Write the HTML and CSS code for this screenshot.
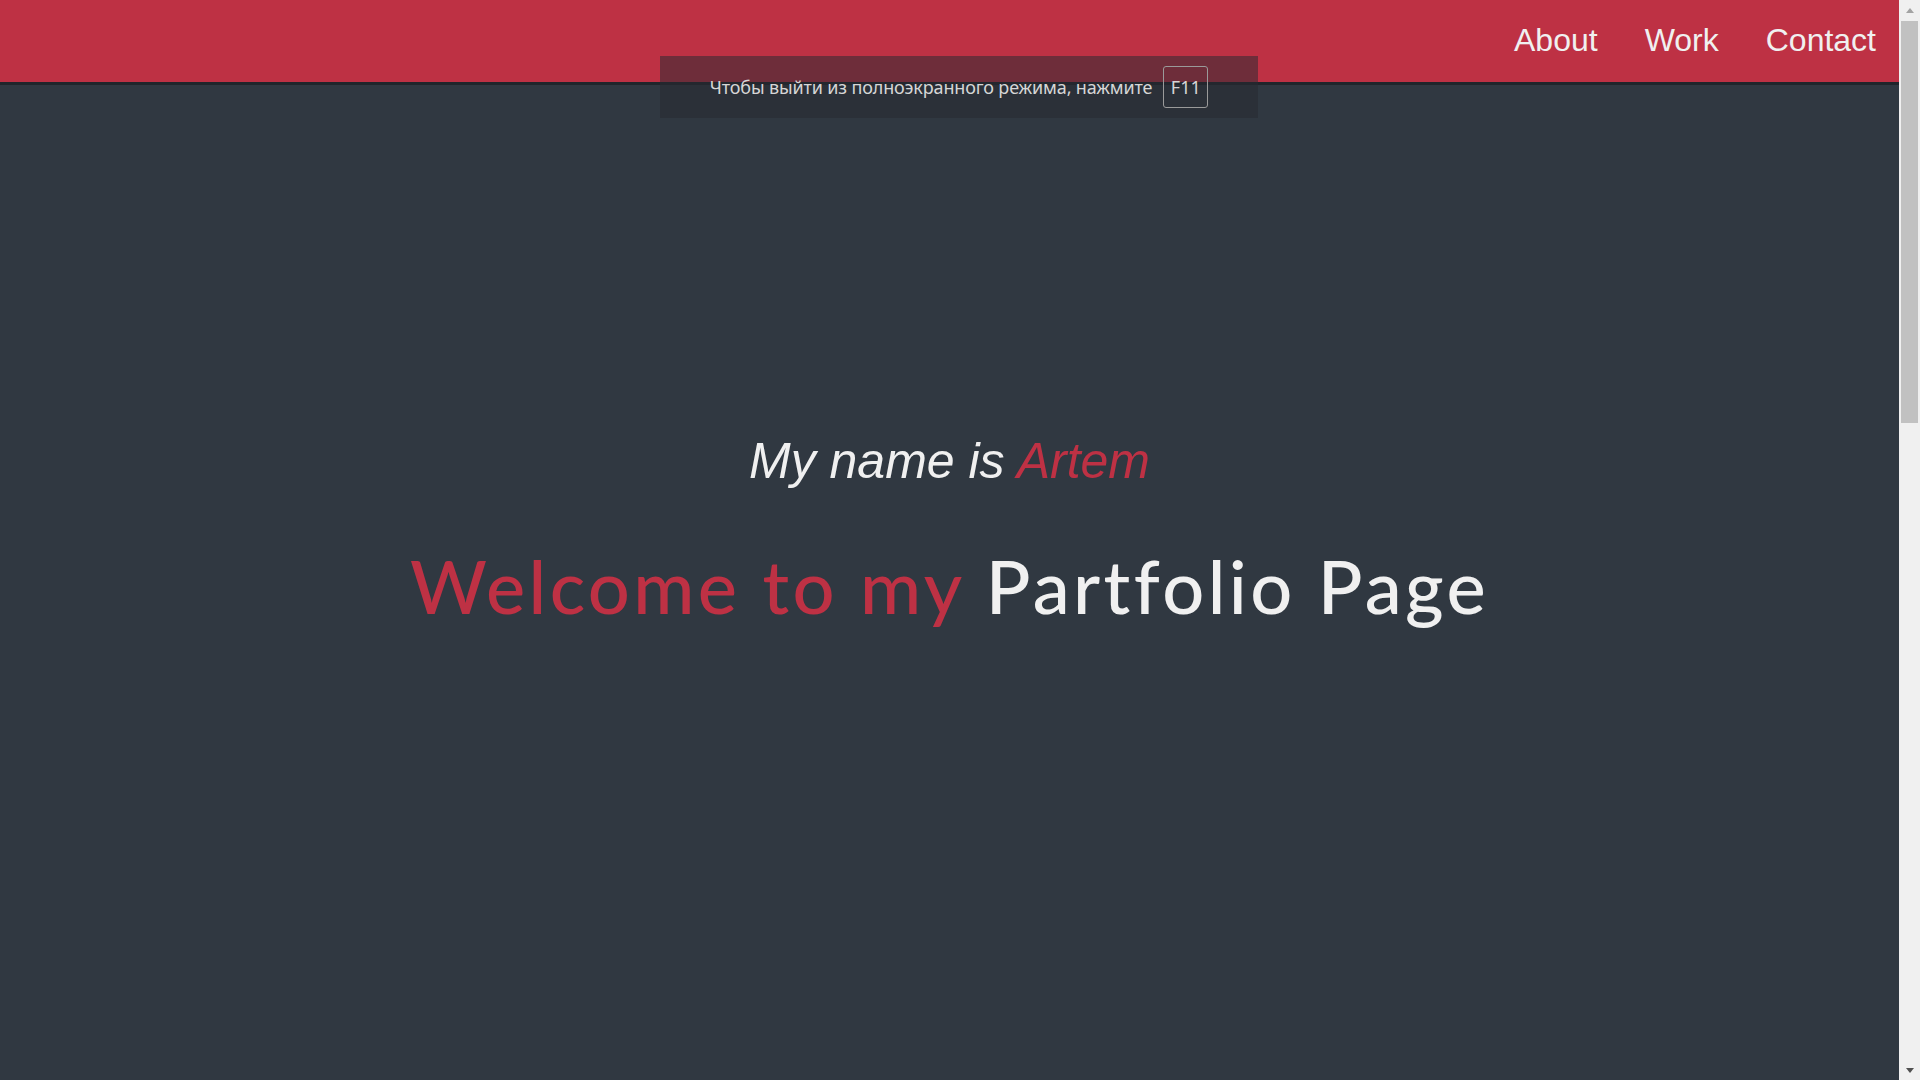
FILE: index.html
```html
<!DOCTYPE html>
<html lang="en">
<head>
<meta charset="utf-8">
<title>Portfolio</title>
<link rel="stylesheet" href="styles.css">
</head>
<body>
  <div class="page">
    <header class="navbar">
      <ul class="nav-list">
        <li><a href="#about">About</a></li>
        <li><a href="#work">Work</a></li>
        <li><a href="#contact">Contact</a></li>
      </ul>
    </header>
    <section class="welcome">
      <h2 class="intro">My name is <span class="accent">Artem</span></h2>
      <h1 class="title"><span class="accent">Welcome to my</span> Partfolio Page</h1>
    </section>
  </div>
  <div class="scrollbar">
    <div class="sb-btn"><span class="arrow-up"></span></div>
    <div class="sb-thumb"></div>
    <div class="sb-track"></div>
    <div class="sb-btn sb-btn-bottom"><span class="arrow-down"></span></div>
  </div>
  <div class="fs-notice">
    <span class="fs-text">Чтобы выйти из полноэкранного режима, нажмите</span>
    <span class="fs-key">F11</span>
  </div>
</body>
</html>
```

FILE: styles.css
```css
* { box-sizing: border-box; }

html, body {
  margin: 0;
  padding: 0;
  height: 100%;
  overflow: hidden;
}

body {
  display: flex;
  flex-direction: row;
  background: #303841;
  position: relative;
  font-family: "Liberation Sans", Arial, sans-serif;
}

.page {
  flex: 1;
  display: flex;
  flex-direction: column;
  height: 100vh;
  background: #303841;
}

.navbar {
  height: 85px;
  background: #be3144;
  border-bottom: 3px solid #20252b;
  display: flex;
  justify-content: flex-end;
  align-items: center;
  padding-right: 23px;
  padding-bottom: 2px;
}

.nav-list {
  list-style: none;
  margin: 0;
  padding: 0;
  display: flex;
  gap: 47px;
}

.nav-list a {
  color: #f0f0f0;
  text-decoration: none;
  font-size: 32px;
  line-height: 37px;
  display: block;
}

.welcome {
  flex: 1;
  display: flex;
  flex-direction: column;
  align-items: center;
  padding-top: 351px;
}

.intro {
  margin: 0;
  font-family: "Liberation Sans", Arial, sans-serif;
  font-style: italic;
  font-weight: 400;
  font-size: 50px;
  line-height: 50px;
  color: #f0f0f0;
}

.title {
  margin: 63px 0 0;
  font-family: Lato, "Noto Sans", sans-serif;
  font-weight: 500;
  font-size: 74px;
  line-height: 74px;
  letter-spacing: 3.4px;
  font-variant-ligatures: none;
  color: #f0f0f0;
  white-space: nowrap;
}

.accent { color: #be3144; }

.scrollbar {
  width: 21px;
  height: 100vh;
  background: #f0f0f0;
  display: flex;
  flex-direction: column;
  flex-shrink: 0;
}

.sb-btn {
  height: 21px;
  display: flex;
  justify-content: center;
  align-items: center;
  padding-left: 1px;
}

.sb-btn-bottom { padding-top: 2px; }

.arrow-up {
  width: 0;
  height: 0;
  border-left: 4.5px solid transparent;
  border-right: 4.5px solid transparent;
  border-bottom: 5px solid #a3a3a3;
}

.arrow-down {
  width: 0;
  height: 0;
  border-left: 4.5px solid transparent;
  border-right: 4.5px solid transparent;
  border-top: 5px solid #505050;
}

.sb-thumb {
  height: 402px;
  width: 17px;
  margin-left: 2px;
  background: #c1c1c1;
}

.sb-track { flex: 1; }

.fs-notice {
  position: absolute;
  top: 56px;
  left: 660px;
  width: 598px;
  height: 62px;
  background: rgba(40, 42, 50, 0.53);
  display: flex;
  align-items: center;
  justify-content: center;
  gap: 11px;
  font-family: "Noto Sans", "Open Sans", sans-serif;
  color: #d6d6d6;
}

.fs-text {
  font-size: 18px;
  letter-spacing: -0.15px;
}

.fs-key {
  width: 45px;
  height: 42px;
  border: 1px solid #9a9a9a;
  border-radius: 3px;
  display: flex;
  align-items: center;
  justify-content: center;
  font-size: 18px;
}
```
